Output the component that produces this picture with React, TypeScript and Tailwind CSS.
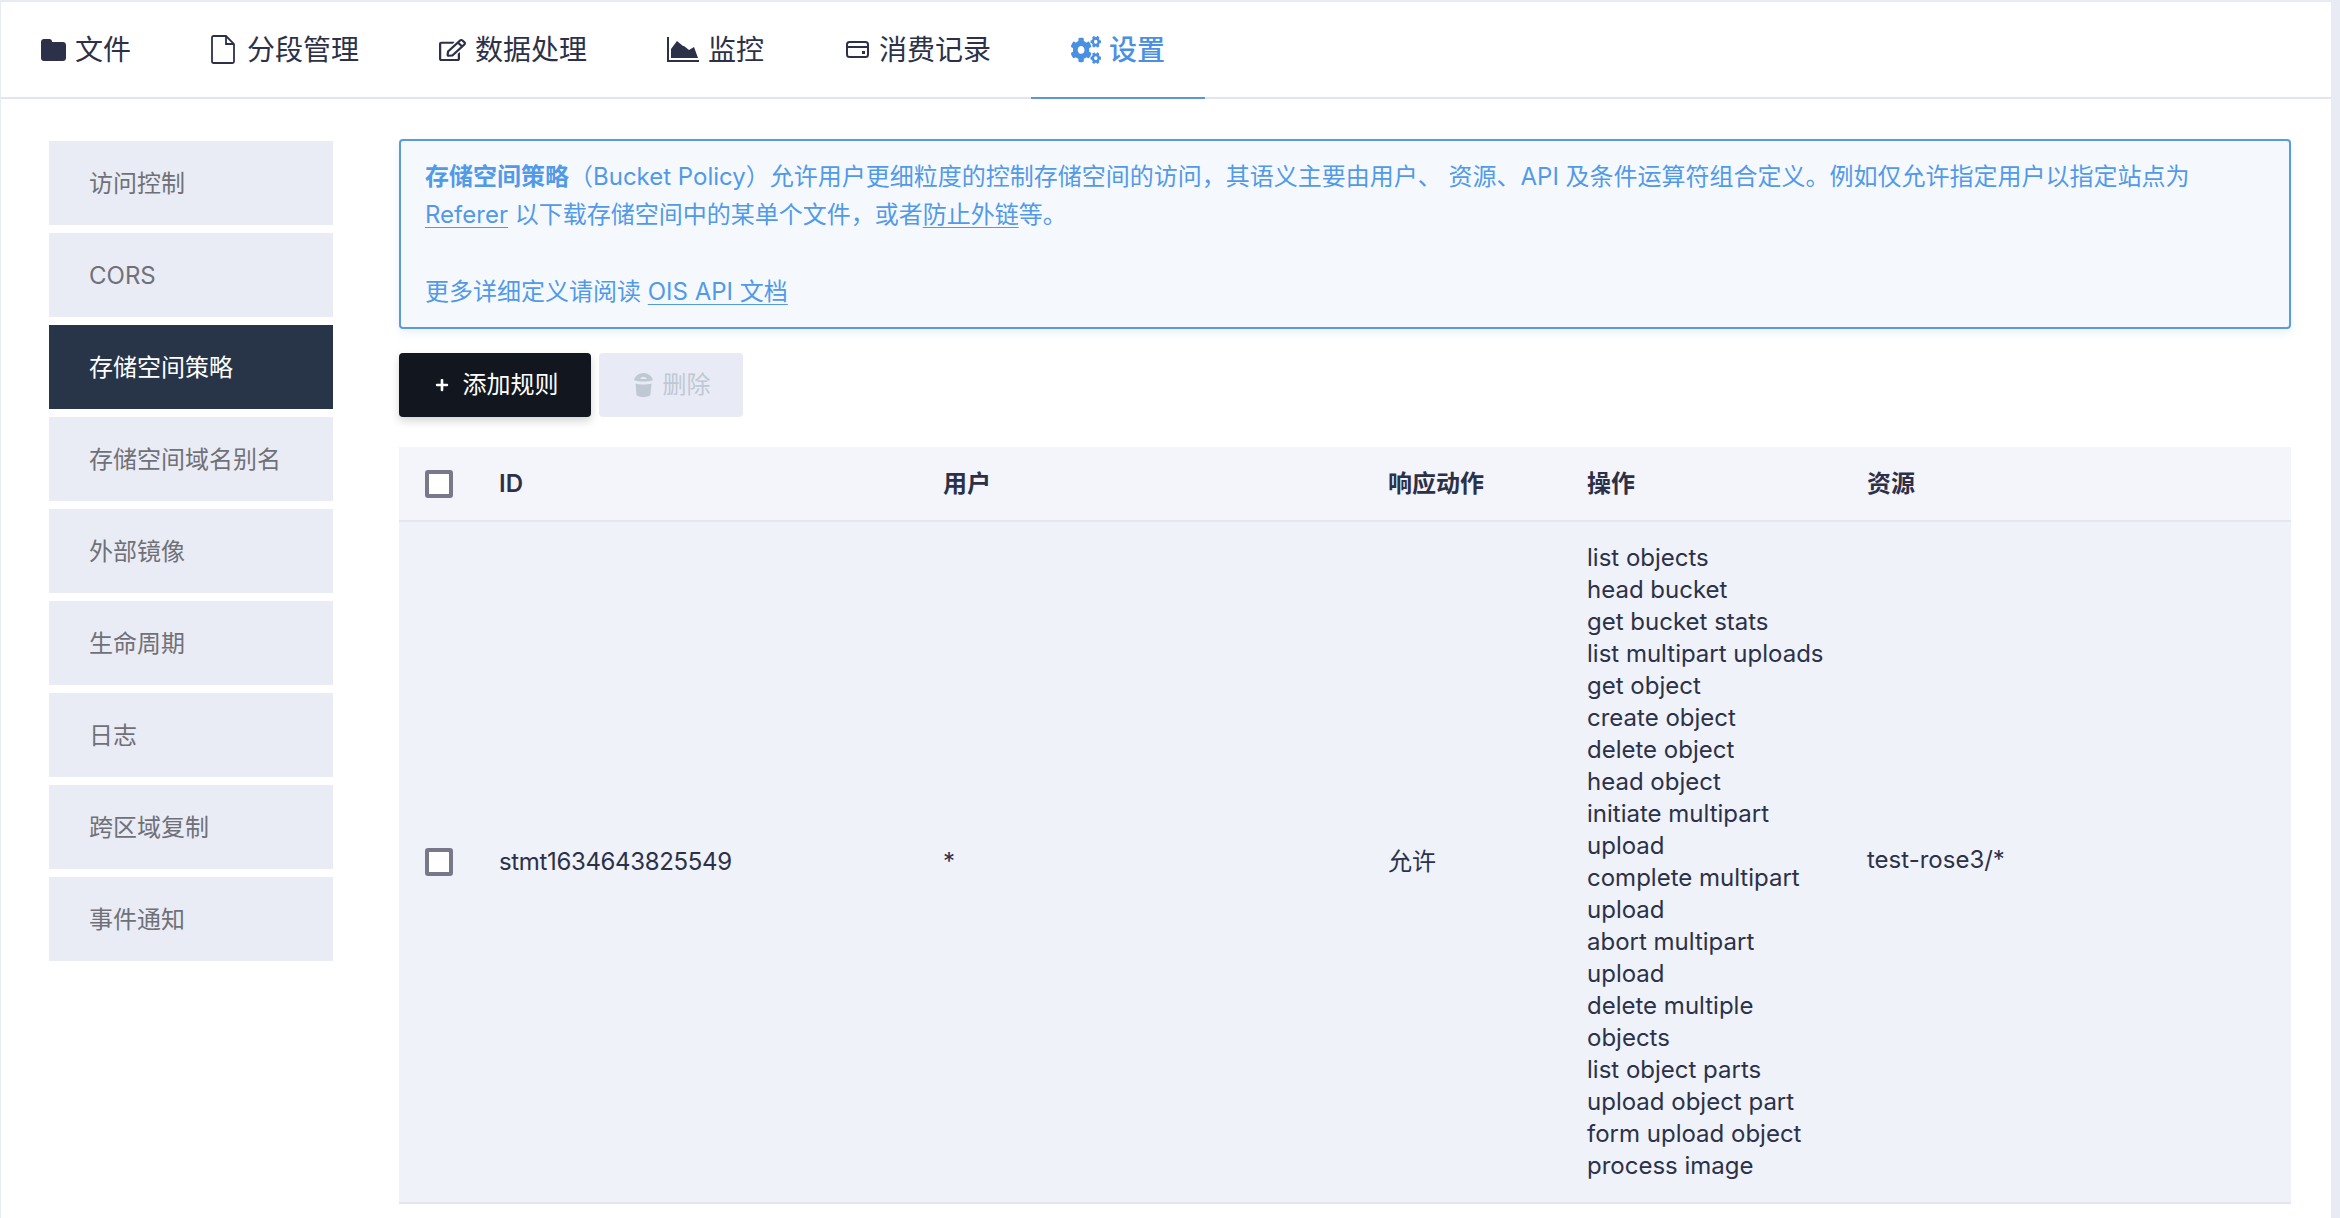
import React from 'react';
import { FaRegEdit, FaCogs, FaPlus } from 'react-icons/fa';

const FONT = '[font-family:Inter,"Noto_Sans_CJK_SC",sans-serif]';

function FolderIcon() {
  return (
    <svg width="25" height="22" viewBox="0 0 25 22" fill="currentColor">
      <path d="M3 0h5.500c1.500 0 2.500 1 2.500 2.500V3h11c1.700 0 3 1.300 3 3v13c0 1.700-1.300 3-3 3H3c-1.700 0-3-1.300-3-3V3c0-1.700 1.300-3 3-3z" />
    </svg>
  );
}

function FileIcon() {
  return (
    <svg width="24" height="29" viewBox="0 0 24 29" fill="none" stroke="currentColor" strokeWidth="1.800">
      <path d="M2.500 1h12.500l8 8v17.500c0 .8-.7 1.500-1.500 1.500h-19c-.8 0-1.500-.7-1.500-1.500v-24c0-.8.7-1.500 1.500-1.500z" />
      <path d="M15 1v8h8" />
    </svg>
  );
}

function AreaIcon() {
  return (
    <svg width="32" height="25" viewBox="0 0 32 25" fill="currentColor">
      <path d="M0 0h2v23h30v2H0z" />
      <path d="M4 21V12l6-8 6 5 1 0 5 4 5-3 4 11z" />
    </svg>
  );
}

function WalletIcon() {
  return (
    <svg width="25" height="17" viewBox="0 0 25 17" fill="none">
      <rect x="3" y="1" width="21" height="15" rx="2.500" stroke="currentColor" strokeWidth="2" />
      <path d="M3 6h21" stroke="currentColor" strokeWidth="2" />
      <rect x="18" y="10" width="3" height="3" fill="currentColor" />
    </svg>
  );
}

function TrashIcon() {
  return (
    <svg width="19" height="24" viewBox="0 0 19 24" fill="currentColor">
      <path d="M0 7C1 3 5 0 9.500 0S18 3 19 7c-2 1-5.500 1.500-9.500 1.500S2 8 0 7zm6-1.500c1-1 2.300-1.500 3.500-1.500s2.500.5 3.500 1.500c-1 .4-2.300.5-3.500.5S7 5.900 6 5.500z" fillRule="evenodd" />
      <path d="M1.500 10.500c2.200.8 5.200 1 8 1s5.800-.2 8-1l-1 11c-.1 1.500-3.200 2.500-7 2.500s-6.900-1-7-2.500z" />
    </svg>
  );
}

const tabs = [
  { label: '文件', icon: <FolderIcon />, gap: 'gap-[9px]' },
  { label: '分段管理', icon: <FileIcon />, gap: 'gap-[12px]' },
  { label: '数据处理', icon: <FaRegEdit preserveAspectRatio="none" className="w-[27px] h-[22px]" />, gap: 'gap-[9px]' },
  { label: '监控', icon: <AreaIcon />, gap: 'gap-[9px]' },
  { label: '消费记录', icon: <WalletIcon />, gap: 'gap-[10px]' },
  { label: '设置', icon: <FaCogs preserveAspectRatio="none" className="w-[30px] h-[28px]" />, gap: 'gap-[8px]', active: true },
];

const menu = ['访问控制', 'CORS', '存储空间策略', '存储空间域名别名', '外部镜像', '生命周期', '日志', '跨区域复制', '事件通知'];

const actions = [
  'list objects',
  'head bucket',
  'get bucket stats',
  'list multipart uploads',
  'get object',
  'create object',
  'delete object',
  'head object',
  'initiate multipart upload',
  'complete multipart upload',
  'abort multipart upload',
  'delete multiple objects',
  'list object parts',
  'upload object part',
  'form upload object',
  'process image',
];

function Checkbox() {
  return <div className="w-[28px] h-[28px] bg-white border-[4px] border-[#77788a] rounded-[3px]" />;
}

export default function App() {
  return (
    <div className={`${FONT} w-[2340px] h-[1218px] overflow-hidden bg-white flex flex-col border-t-2 border-l border-r-[9px] border-[#e8ebf4] text-[#2c3149]`}>
      <nav className="h-[95px] shrink-0 flex border-b-2 border-[#e2e5ec] box-content">
        {tabs.map((t) => (
          <div
            key={t.label}
            className={`flex items-center px-[40px] ${t.gap} text-[28px] -mb-[2px] border-b-2 ${
              t.active ? 'text-[#4a90e2] border-[#5b96d6] font-medium' : 'border-transparent'
            }`}
          >
            {t.icon}
            <span>{t.label}</span>
          </div>
        ))}
      </nav>

      <div className="flex flex-1 pt-[42px] pl-[48px] pr-[40px] gap-[66px]">
        <aside className="w-[284px] shrink-0 flex flex-col gap-2">
          {menu.map((m) => (
            <div
              key={m}
              className={`h-[84px] flex items-center pl-[40px] pt-[2px] text-[24px] ${
                m === '存储空间策略' ? 'bg-[#283548] text-white' : 'bg-[#e9ecf5] text-[#707178]'
              }`}
            >
              {m}
            </div>
          ))}
        </aside>

        <main className="flex-1 -mt-[2px]">
          <div className="border-2 border-[#5b9bdc] rounded-[4px] bg-[#f5f9fe] px-[24px] pt-[17px] pb-[15px] text-[24px] leading-[38.4px] text-[#5299e8] shadow-[0_4px_8px_rgba(74,144,217,0.12)]">
            <div>
              <strong className="font-bold">存储空间策略</strong>（Bucket Policy）允许用户更细粒度的控制存储空间的访问，其语义主要由用户、 资源、API 及条件运算符组合定义。例如仅允许指定用户以指定站点为
            </div>
            <div>
              <span className="underline decoration-1 underline-offset-4">Referer</span> 以下载存储空间中的某单个文件，或者<span className="underline decoration-1 underline-offset-4">防止外链</span>等。
            </div>
            <div className="h-[38.4px]" />
            <div>
              更多详细定义请阅读 <span className="underline decoration-1 underline-offset-4">OIS API 文档</span>
            </div>
          </div>

          <div className="flex gap-2 mt-[24.4px] mb-[30px]">
            <button className="w-[192px] h-[64px] pl-[3px] rounded-[4px] bg-[#12171f] text-white text-[24px] flex items-center justify-center gap-[14px] shadow-[0_4px_8px_rgba(18,23,31,0.18)]">
              <FaPlus className="w-[14px] h-[14px]" />
              添加规则
            </button>
            <button className="w-[144px] h-[64px] pl-[2px] rounded-[4px] bg-[#e8ebf5] text-[#c0c8d4] text-[24px] flex items-center justify-center gap-[10px]">
              <TrashIcon />
              删除
            </button>
          </div>

          <table className="w-full table-fixed text-[24px] leading-[32px]">
            <colgroup>
              <col className="w-[76px]" />
              <col className="w-[444px]" />
              <col className="w-[445px]" />
              <col className="w-[199px]" />
              <col className="w-[280px]" />
              <col />
            </colgroup>
            <thead>
              <tr className="h-[74px] bg-[#f3f5fa] border-b-2 border-[#e2e6ee] text-left font-semibold">
                <th className="pl-[26px]"><Checkbox /></th>
                <th className="px-[24px] font-semibold">ID</th>
                <th className="px-[24px] font-semibold">用户</th>
                <th className="px-[24px] font-semibold">响应动作</th>
                <th className="px-[24px] font-semibold">操作</th>
                <th className="px-[24px] font-semibold">资源</th>
              </tr>
            </thead>
            <tbody>
              <tr className="bg-[#eff2f8] border-b-2 border-[#e2e6ee]">
                <td className="pl-[26px]"><Checkbox /></td>
                <td className="px-[24px] tracking-[-0.35px]">stmt1634643825549</td>
                <td className="px-[24px]">*</td>
                <td className="px-[24px]">允许</td>
                <td className="pl-[24px] pr-[8px] py-[20px]">
                  {actions.map((a) => (
                    <div key={a}>{a}</div>
                  ))}
                </td>
                <td className="px-[24px] pb-[4px]">test-rose3/*</td>
              </tr>
            </tbody>
          </table>
        </main>
      </div>
    </div>
  );
}
